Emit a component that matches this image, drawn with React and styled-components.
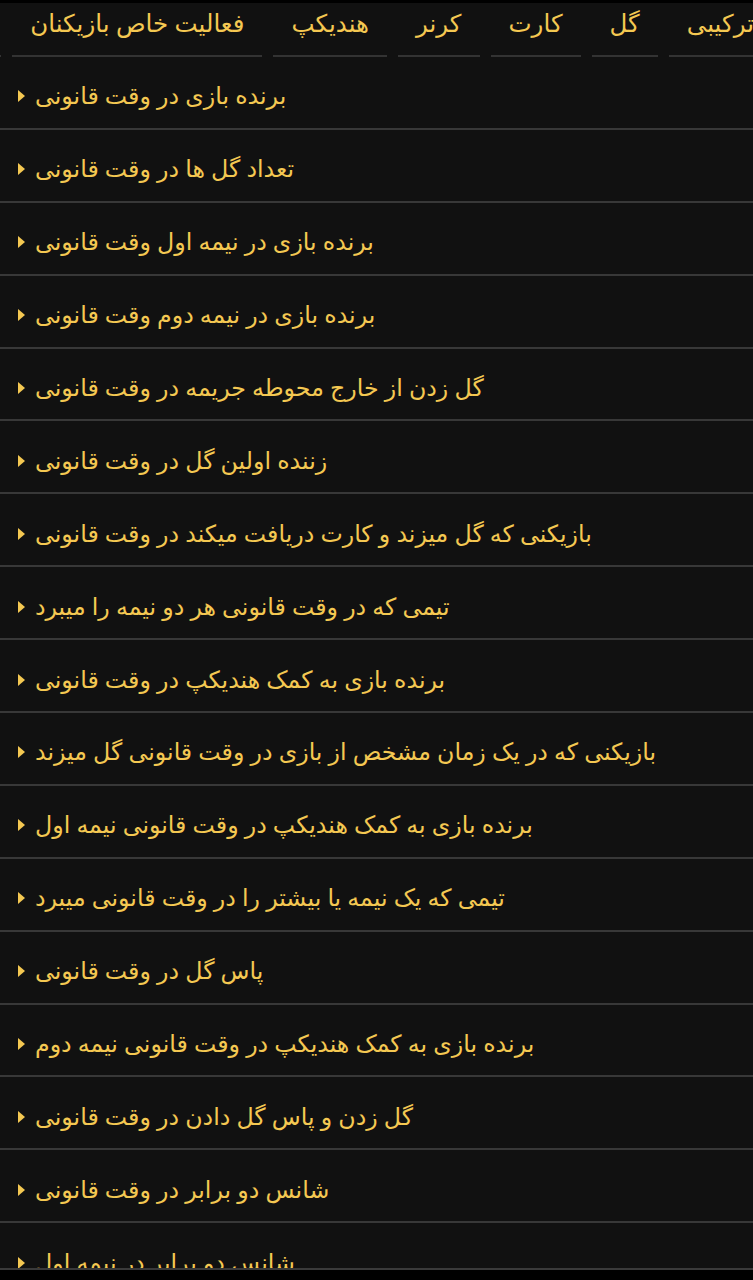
import styled, { createGlobalStyle } from "styled-components";

const tabs = ["ترکیبی", "گل", "کارت", "کرنر", "هندیکپ", "فعالیت خاص بازیکنان", "آمار"];

const markets = [
  "برنده بازی در وقت قانونی",
  "تعداد گل ها در وقت قانونی",
  "برنده بازی در نیمه اول وقت قانونی",
  "برنده بازی در نیمه دوم وقت قانونی",
  "گل زدن از خارج محوطه جریمه در وقت قانونی",
  "زننده اولین گل در وقت قانونی",
  "بازیکنی که گل میزند و کارت دریافت میکند در وقت قانونی",
  "تیمی که در وقت قانونی هر دو نیمه را میبرد",
  "برنده بازی به کمک هندیکپ در وقت قانونی",
  "بازیکنی که در یک زمان مشخص از بازی در وقت قانونی گل میزند",
  "برنده بازی به کمک هندیکپ در وقت قانونی نیمه اول",
  "تیمی که یک نیمه یا بیشتر را در وقت قانونی میبرد",
  "پاس گل در وقت قانونی",
  "برنده بازی به کمک هندیکپ در وقت قانونی نیمه دوم",
  "گل زدن و پاس گل دادن در وقت قانونی",
  "شانس دو برابر در وقت قانونی",
  "شانس دو برابر در نیمه اول",
];

const GlobalStyle = createGlobalStyle`
  html, body {
    margin: 0;
    padding: 0;
    background: #000;
  }
  body {
    font-family: "Noto Sans", "DejaVu Sans", sans-serif;
  }
`;

const Page = styled.div`
  width: 753px;
  height: 1280px;
  background: #000;
  padding-top: 3px;
  box-sizing: border-box;
`;

const Panel = styled.div`
  height: 1267px;
  background: #111111;
  border-bottom: 2px solid #3a3a3a;
  box-sizing: border-box;
  overflow: hidden;
`;

const TabStrip = styled.div`
  overflow: hidden;
  height: 54px;
`;

const TabTrack = styled.div`
  display: flex;
  direction: rtl;
  margin-right: -19px;
  gap: 11px;
`;

const Tab = styled.div`
  flex: none;
  height: 52px;
  padding: 0 18px;
  border-bottom: 2px solid #333;
  color: #f4c852;
  font-size: 24.5px;
  line-height: 40px;
  white-space: nowrap;
`;

const Row = styled.div`
  display: flex;
  align-items: center;
  gap: 10px;
  height: 72.9px;
  padding: 6px 0 0 18px;
  box-sizing: border-box;
  border-bottom: 2px solid #383838;
`;

const Caret = styled.span`
  width: 0;
  height: 0;
  border-top: 6px solid transparent;
  border-bottom: 6px solid transparent;
  border-left: 7px solid #f4c852;
  margin-top: 2px;
`;

const Label = styled.span`
  direction: rtl;
  color: #f4c852;
  font-size: 23.7px;
  white-space: nowrap;
`;

export default function App() {
  return (
    <Page>
      <GlobalStyle />
      <Panel>
        <TabStrip>
          <TabTrack>
            {tabs.map((t) => (
              <Tab key={t}>{t}</Tab>
            ))}
          </TabTrack>
        </TabStrip>
        {markets.map((m) => (
          <Row key={m}>
            <Caret />
            <Label>{m}</Label>
          </Row>
        ))}
      </Panel>
    </Page>
  );
}
